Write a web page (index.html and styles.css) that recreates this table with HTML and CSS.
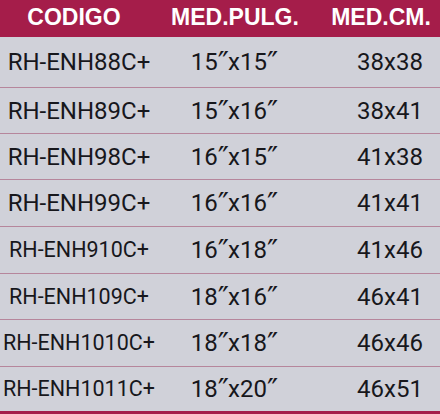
FILE: index.html
```html
<!DOCTYPE html>
<html lang="es">
<head>
<meta charset="utf-8">
<title>Medidas</title>
<link rel="stylesheet" href="styles.css">
</head>
<body>
<div class="table">
  <div class="head">
    <div class="hc c1">CODIGO</div>
    <div class="hc c2">MED.PULG.</div>
    <div class="hc c3">MED.CM.</div>
  </div>
  <div class="row r1"><div class="c c1">RH-ENH88C+</div><div class="c c2">15<span class="pr">″</span>x15<span class="pr">″</span></div><div class="c c3">38x38</div></div>
  <div class="row r2"><div class="c c1">RH-ENH89C+</div><div class="c c2">15<span class="pr">″</span>x16<span class="pr">″</span></div><div class="c c3">38x41</div></div>
  <div class="row r3"><div class="c c1">RH-ENH98C+</div><div class="c c2">16<span class="pr">″</span>x15<span class="pr">″</span></div><div class="c c3">41x38</div></div>
  <div class="row r4"><div class="c c1">RH-ENH99C+</div><div class="c c2">16<span class="pr">″</span>x16<span class="pr">″</span></div><div class="c c3">41x41</div></div>
  <div class="row r5 small"><div class="c c1">RH-ENH910C+</div><div class="c c2">16<span class="pr">″</span>x18<span class="pr">″</span></div><div class="c c3">41x46</div></div>
  <div class="row r6 small"><div class="c c1">RH-ENH109C+</div><div class="c c2">18<span class="pr">″</span>x16<span class="pr">″</span></div><div class="c c3">46x41</div></div>
  <div class="row r7 small"><div class="c c1">RH-ENH1010C+</div><div class="c c2">18<span class="pr">″</span>x18<span class="pr">″</span></div><div class="c c3">46x46</div></div>
  <div class="row r8 small last"><div class="c c1">RH-ENH1011C+</div><div class="c c2">18<span class="pr">″</span>x20<span class="pr">″</span></div><div class="c c3">46x51</div></div>
</div>
</body>
</html>
```
FILE: styles.css
```css
* { box-sizing: border-box; }
html, body { margin: 0; padding: 0; }
body {
  width: 440px;
  height: 414px;
  background: #a51d4a;
  overflow: hidden;
}
.table {
  display: flex;
  flex-direction: column;
  width: 440px;
}
.head {
  display: grid;
  grid-template-columns: 158px 152px 130px;
  height: 37px;
  background: #a51d4a;
  align-items: center;
  padding-bottom: 3px;
}
.hc {
  font-family: "Liberation Sans", Arial, sans-serif;
  font-weight: bold;
  font-size: 23px;
  color: #ffffff;
  text-align: center;
  white-space: nowrap;
}
.head .c1 { padding-right: 10px; }
.head .c2 { padding-left: 2px; }
.head .c3 { padding-left: 12px; }
.row {
  display: grid;
  grid-template-columns: 158px 152px 130px;
  align-items: center;
  background: #d0d1d9;
  border-bottom: 1px solid #b6869c;
  height: 46px;
}
.r1 { height: 51px; }
.r2, .r3 { height: 46px; }
.r4, .r5 { height: 47px; }
.r6 { height: 46px; }
.r7 { height: 47px; }
.r8 { height: 44px; border-bottom: none; }
.c {
  font-family: Roboto, "Liberation Sans", sans-serif;
  font-size: 24px;
  line-height: 28px;
  color: #17171c;
  text-align: center;
  white-space: nowrap;
}
.pr {
  font-family: "DejaVu Sans", sans-serif;
  font-size: 30px;
  line-height: 0;
  vertical-align: -3px;
  letter-spacing: -1px;
}
.small .c1 { font-size: 21.5px; }
.row .c3 { padding-left: 30px; }
```
